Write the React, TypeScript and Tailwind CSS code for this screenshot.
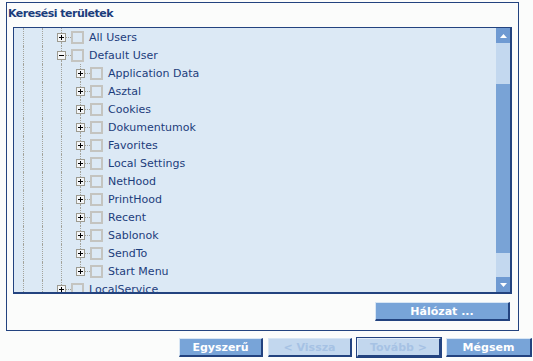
import React from 'react';

const FONT = { fontFamily: '"DejaVu Sans", Verdana, sans-serif' };

type Node = { label: string; level: number; open?: boolean; last?: boolean };

const nodes: Node[] = [
  { label: 'All Users', level: 3 },
  { label: 'Default User', level: 3, open: true },
  { label: 'Application Data', level: 4 },
  { label: 'Asztal', level: 4 },
  { label: 'Cookies', level: 4 },
  { label: 'Dokumentumok', level: 4 },
  { label: 'Favorites', level: 4 },
  { label: 'Local Settings', level: 4 },
  { label: 'NetHood', level: 4 },
  { label: 'PrintHood', level: 4 },
  { label: 'Recent', level: 4 },
  { label: 'Sablonok', level: 4 },
  { label: 'SendTo', level: 4 },
  { label: 'Start Menu', level: 4, last: true },
  { label: 'LocalService', level: 3 },
];

const Guide = () => (
  <div className="w-[19px] h-full flex justify-center flex-shrink-0">
    <div className="h-full border-l border-dotted border-[#a4a49c]" />
  </div>
);

const Expander = ({ open }: { open?: boolean }) => (
  <svg width="9" height="9" viewBox="0 0 9 9" className="block flex-shrink-0">
    <rect x="0.5" y="0.5" width="8" height="8" fill="#f4f6f8" stroke="#9c9a90" />
    <rect x="2" y="4" width="5" height="1" fill="#000" />
    {!open && <rect x="4" y="2" width="1" height="5" fill="#000" />}
  </svg>
);

const TreeRow = ({ label, level, open, last }: Node) => (
  <div className="flex h-[18px] items-center flex-shrink-0">
    {Array.from({ length: level - 1 }).map((_, i) => (
      <Guide key={i} />
    ))}
    <div className="w-[19px] h-full flex flex-col items-center flex-shrink-0">
      <div className="h-[5px] border-l border-dotted border-[#a4a49c]" />
      <div className="flex items-center w-[19px]">
        <div className="w-[5px]" />
        <Expander open={open} />
        <div className="w-[5px] border-t border-dotted border-[#a4a49c]" />
      </div>
      {last ? (
        <div className="flex-1" />
      ) : (
        <div className="flex-1 border-l border-dotted border-[#a4a49c]" />
      )}
    </div>
    <div className="w-[13px] h-[13px] border-2 border-[#c4c4c0] flex-shrink-0" />
    <span className="ml-[5px] text-[11px] leading-none text-[#1c3d7c] whitespace-nowrap">{label}</span>
  </div>
);

const Btn = ({ label, width = 'w-[84px]', disabled, focused }: { label: string; width?: string; disabled?: boolean; focused?: boolean }) => (
  <div
    className={`${width} h-[19px] flex items-center justify-center border-t border-l border-r-2 border-b-2 ${
      focused ? 'outline outline-1 outline-[#23437f] border-t-[#e4eef8] border-l-[#e4eef8]' : 'border-t-[#d8e6f4] border-l-[#d8e6f4]'
    } border-r-[#23437f] border-b-[#23437f] ${disabled ? 'bg-[#c2d7ee]' : 'bg-[#78a4d8]'}`}
  >
    <span className={`text-[11px] font-bold leading-none ${disabled ? 'text-[#a6c2e4]' : 'text-white'}`}>{label}</span>
  </div>
);

export default function App() {
  return (
    <div className="w-[533px] h-[361px] bg-[#fbfcfb] overflow-hidden flex flex-col" style={FONT}>
      {/* search area frame */}
      <div className="ml-[6px] mt-[2px] w-[513px] h-[329px] border border-[#23437f] flex flex-col">
        <div className="h-[24px] pl-[1px] pt-[4px] text-[11px] font-bold tracking-[-0.5px] text-[#1c3d7c] leading-[14px]">Keresési területek</div>
        <div className="ml-[6px] w-[499px] h-[267px] border border-r-2 border-b-2 border-[#23437f] bg-[#dce9f5] flex">
          <div className="flex-1 overflow-hidden flex flex-col">
            {nodes.map(n => (
              <TreeRow key={n.label} {...n} />
            ))}
          </div>
          {/* scrollbar */}
          <div className="w-[14px] flex flex-col">
            <div className="h-[15px] bg-[#6f9ad2] flex items-center justify-center">
              <svg width="7" height="4" viewBox="0 0 7 4"><path d="M3.5 0L7 4H0z" fill="#fff" /></svg>
            </div>
            <div className="h-[41px] bg-[#c3d8ef]" />
            <div className="flex-1 bg-[#79a3d6]" />
            <div className="h-[24px] bg-[#c3d8ef]" />
            <div className="h-[15px] bg-[#6f9ad2] flex items-center justify-center">
              <svg width="7" height="4" viewBox="0 0 7 4"><path d="M0 0H7L3.5 4z" fill="#fff" /></svg>
            </div>
          </div>
        </div>
        <div className="flex justify-end pr-[8px] mt-[8px]">
          <Btn label="Hálózat ..." width="w-[135px]" />
        </div>
      </div>
      <div className="flex gap-[5px] ml-[179px] mt-[7px]">
        <Btn label="Egyszerű" />
        <Btn label="< Vissza" disabled />
        <Btn label="Tovább >" disabled focused />
        <Btn label="Mégsem" width="w-[86px]" />
      </div>
    </div>
  );
}
